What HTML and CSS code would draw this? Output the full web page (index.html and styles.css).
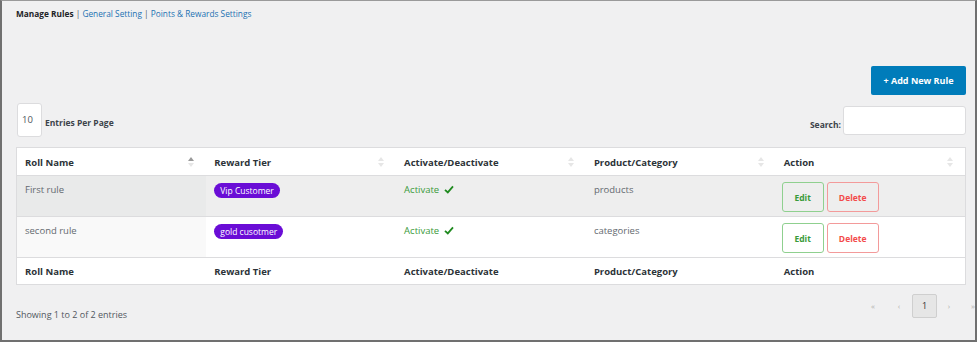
FILE: index.html
```html
<!DOCTYPE html>
<html>
<head>
<meta charset="utf-8">
<link rel="stylesheet" href="styles.css">
</head>
<body>
<div class="frame">
  <div class="nav">
    <span class="current">Manage Rules</span> | <a href="#">General Setting</a> | <a href="#">Points &amp; Rewards Settings</a>
  </div>
  <div class="toolbar">
    <button class="add-btn">+ Add New Rule</button>
  </div>
  <div class="controls">
    <div class="length">
      <div class="len-input">10</div>
      <span class="len-label">Entries Per Page</span>
    </div>
    <div class="search">
      <span class="search-label">Search:</span>
      <div class="search-input"></div>
    </div>
  </div>
  <table class="rules">
    <thead>
      <tr>
        <th><span>Roll Name</span><span class="sort asc"><i class="up"></i><i class="down"></i></span></th>
        <th><span>Reward Tier</span><span class="sort"><i class="up"></i><i class="down"></i></span></th>
        <th><span>Activate/Deactivate</span><span class="sort"><i class="up"></i><i class="down"></i></span></th>
        <th><span>Product/Category</span><span class="sort"><i class="up"></i><i class="down"></i></span></th>
        <th><span>Action</span><span class="sort"><i class="up"></i><i class="down"></i></span></th>
      </tr>
    </thead>
    <tbody>
      <tr class="odd">
        <td class="sorted">First rule</td>
        <td><span class="badge">Vip Customer</span></td>
        <td class="active">Activate <svg class="check" width="10" height="9" viewBox="0 0 10 9"><path d="M1 4.8 L3.8 7.4 L9 1.4" fill="none" stroke="#1f8a1f" stroke-width="1.8"/></svg></td>
        <td>products</td>
        <td><div class="actions"><button class="edit">Edit</button><button class="delete">Delete</button></div></td>
      </tr>
      <tr class="even">
        <td class="sorted">second rule</td>
        <td><span class="badge">gold cusotmer</span></td>
        <td class="active">Activate <svg class="check" width="10" height="9" viewBox="0 0 10 9"><path d="M1 4.8 L3.8 7.4 L9 1.4" fill="none" stroke="#1f8a1f" stroke-width="1.8"/></svg></td>
        <td>categories</td>
        <td><div class="actions"><button class="edit">Edit</button><button class="delete">Delete</button></div></td>
      </tr>
    </tbody>
    <tfoot>
      <tr>
        <th>Roll Name</th>
        <th>Reward Tier</th>
        <th>Activate/Deactivate</th>
        <th>Product/Category</th>
        <th>Action</th>
      </tr>
    </tfoot>
  </table>
  <div class="bottom">
    <div class="info">Showing 1 to 2 of 2 entries</div>
    <div class="pager">
      <span class="pg">«</span>
      <span class="pg">‹</span>
      <span class="pg current-page">1</span>
      <span class="pg">›</span>
      <span class="pg">»</span>
    </div>
  </div>
</div>
</body>
</html>
```
FILE: styles.css
```css
* { box-sizing: border-box; }
html, body { margin: 0; padding: 0; }
body {
  width: 977px;
  height: 342px;
  overflow: hidden;
  font-family: "Open Sans", "Noto Sans", sans-serif;
  font-size: 9px;
  color: #3c434a;
  background: #f0f0f1;
}
.frame {
  width: 977px;
  height: 342px;
  border-left: 2px solid #707070;
  border-top: 1px solid #9a9a9a;
  border-right: 2px solid #707070;
  border-bottom: 2px solid #707070;
  padding: 0 9px 0 14px;
  background: #f0f0f1;
  overflow: hidden;
}
.nav {
  margin-top: 6px;
  height: 13px;
  line-height: 13px;
  font-size: 8.3px;
  color: #50575e;
  white-space: nowrap;
}
.nav .current { font-weight: 700; color: #1d2327; }
.nav a { color: #2271b1; text-decoration: none; }
.toolbar {
  display: flex;
  justify-content: flex-end;
  margin-top: 46px;
}
.add-btn {
  width: 95px;
  height: 29px;
  border: 0;
  border-radius: 2px;
  background: #007cba;
  color: #fff;
  font-family: inherit;
  font-weight: 700;
  font-size: 9px;
  padding: 0;
}
.controls {
  display: flex;
  justify-content: space-between;
  align-items: flex-end;
  margin-top: 8px;
  height: 34px;
}
.length { display: flex; align-items: center; height: 34px; }
.len-input {
  width: 25px;
  height: 34px;
  margin-left: 1px;
  background: #fff;
  border: 1px solid #dcdcde;
  border-radius: 3px;
  line-height: 32px;
  padding-left: 4px;
  font-size: 9.5px;
  color: #50575e;
}
.len-label { margin-left: 3px; padding-top: 4px; font-weight: 700; font-size: 8.5px; color: #3c434a; }
.search { display: flex; align-items: center; margin-bottom: 2px; }
.search-label { font-weight: 700; font-size: 8.5px; margin-right: 2px; padding-top: 7px; }
.search-input {
  width: 123px;
  height: 29px;
  background: #fff;
  border: 1px solid #dcdcde;
  border-radius: 3px;
}
.rules {
  margin-top: 10px;
  width: 950px;
  border-collapse: collapse;
  table-layout: fixed;
  background: #fff;
  border: 1px solid #dcdcde;
}
.rules th {
  text-align: left;
  font-weight: 700;
  font-size: 9.5px;
  color: #2c3338;
  padding: 0 8px;
  height: 28px;
}
.rules thead th { border-bottom: 1px solid #dcdcde; position: relative; }
.rules thead th span:first-child { vertical-align: middle; }
.sort {
  position: absolute;
  right: 12px;
  top: 9px;
  width: 6px;
  height: 11px;
}
.sort i {
  position: absolute;
  left: 0;
  width: 0;
  height: 0;
  border-left: 3px solid transparent;
  border-right: 3px solid transparent;
}
.sort .up { top: 0; border-bottom: 4px solid #e6e6e6; }
.sort .down { bottom: 1px; border-top: 4px solid #e6e6e6; }
.sort.asc .up { border-bottom-color: #9a9a9a; }
.rules td {
  vertical-align: top;
  padding: 7px 8px 0;
  height: 41px;
  font-size: 9.5px;
  color: #646970;
  border-bottom: 1px solid #dcdcde;
}
.rules tr.odd td { background: #eeeeee; }
.rules tr.odd td.sorted { background: #e9eaea; }
.rules tr.even td { background: #fff; }
.rules tr.even td.sorted { background: #f9f9f9; }
.rules tfoot th { height: 27px; }
.badge {
  display: inline-block;
  background: #6a0dd6;
  color: #fff;
  border-radius: 8px;
  padding: 0 6px;
  height: 15px;
  line-height: 15px;
  font-size: 8.5px;
}
.rules td.active { color: #3a9a3a; }
.check { margin-left: 2px; vertical-align: -1px; }
.actions { display: flex; gap: 3px; margin-top: -1px; margin-left: -2px; }
.actions button {
  height: 30px;
  background: transparent;
  border-radius: 3px;
  font-family: inherit;
  font-weight: 700;
  font-size: 8.5px;
  padding: 0;
}
.edit { width: 42px; border: 1px solid #8fd08f; color: #3a9a3a; }
.delete { width: 52px; border: 1px solid #f39a9a; color: #f34b4b; }
.bottom {
  display: flex;
  justify-content: space-between;
  width: 969px;
}
.info {
  margin-top: 23px;
  font-size: 9px;
  color: #50575e;
}
.pager {
  display: flex;
  align-items: center;
  margin-top: 5px;
}
.pg {
  width: 26px;
  text-align: center;
  font-size: 8px;
  color: #b0b0b0;
}
.pg:nth-child(4), .pg:nth-child(5) { width: 24px; }
.current-page {
  width: 25px;
  height: 24px;
  line-height: 22px;
  border: 1px solid #cfcfcf;
  border-radius: 2px;
  background: #e6e6e6;
  color: #333;
  font-size: 9px;
}
```
